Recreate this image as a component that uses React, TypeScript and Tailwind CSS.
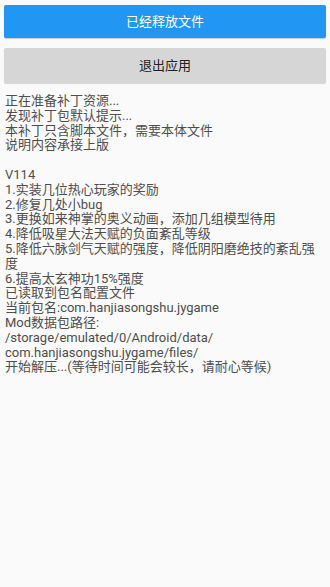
export default function App() {
  const lines = [
    "正在准备补丁资源...",
    "发现补丁包默认提示...",
    "本补丁只含脚本文件，需要本体文件",
    "说明内容承接上版",
    "",
    "V114",
    "1.实装几位热心玩家的奖励",
    "2.修复几处小bug",
    "3.更换如来神掌的奥义动画，添加几组模型待用",
    "4.降低吸星大法天赋的负面紊乱等级",
    "5.降低六脉剑气天赋的强度，降低阴阳磨绝技的紊乱强度",
    "6.提高太玄神功15%强度",
    "已读取到包名配置文件",
    "当前包名:com.hanjiasongshu.jygame",
    "Mod数据包路径:",
    "/storage/emulated/0/Android/data/",
    "com.hanjiasongshu.jygame/files/",
    "开始解压...(等待时间可能会较长，请耐心等候)",
  ]

  return (
    <div className="min-h-[587px] w-[330px] bg-[#fafafa] font-['Roboto','Noto_Sans_CJK_SC',sans-serif]">
      <div className="flex flex-col gap-[10px] px-[4px] pt-[5px]">
        <button className="h-[33px] w-full rounded-[2px] bg-[#2196f3] text-[13px] text-white shadow-[0_1px_1px_rgba(0,0,0,0.2)]">
          已经释放文件
        </button>
        <button className="h-[35px] w-full rounded-[2px] bg-[#d6d6d6] text-[13px] text-[#222] shadow-[0_1px_1px_rgba(0,0,0,0.15)]">
          退出应用
        </button>
      </div>

      {/* log output */}
      <div className="px-[5px] pt-[11px] text-[13px] leading-[14.8px] text-[#4e4e4e]">
        {lines.map((line, i) => (
          <div key={i} className="min-h-[14.8px] break-all">
            {line}
          </div>
        ))}
      </div>
    </div>
  )
}
